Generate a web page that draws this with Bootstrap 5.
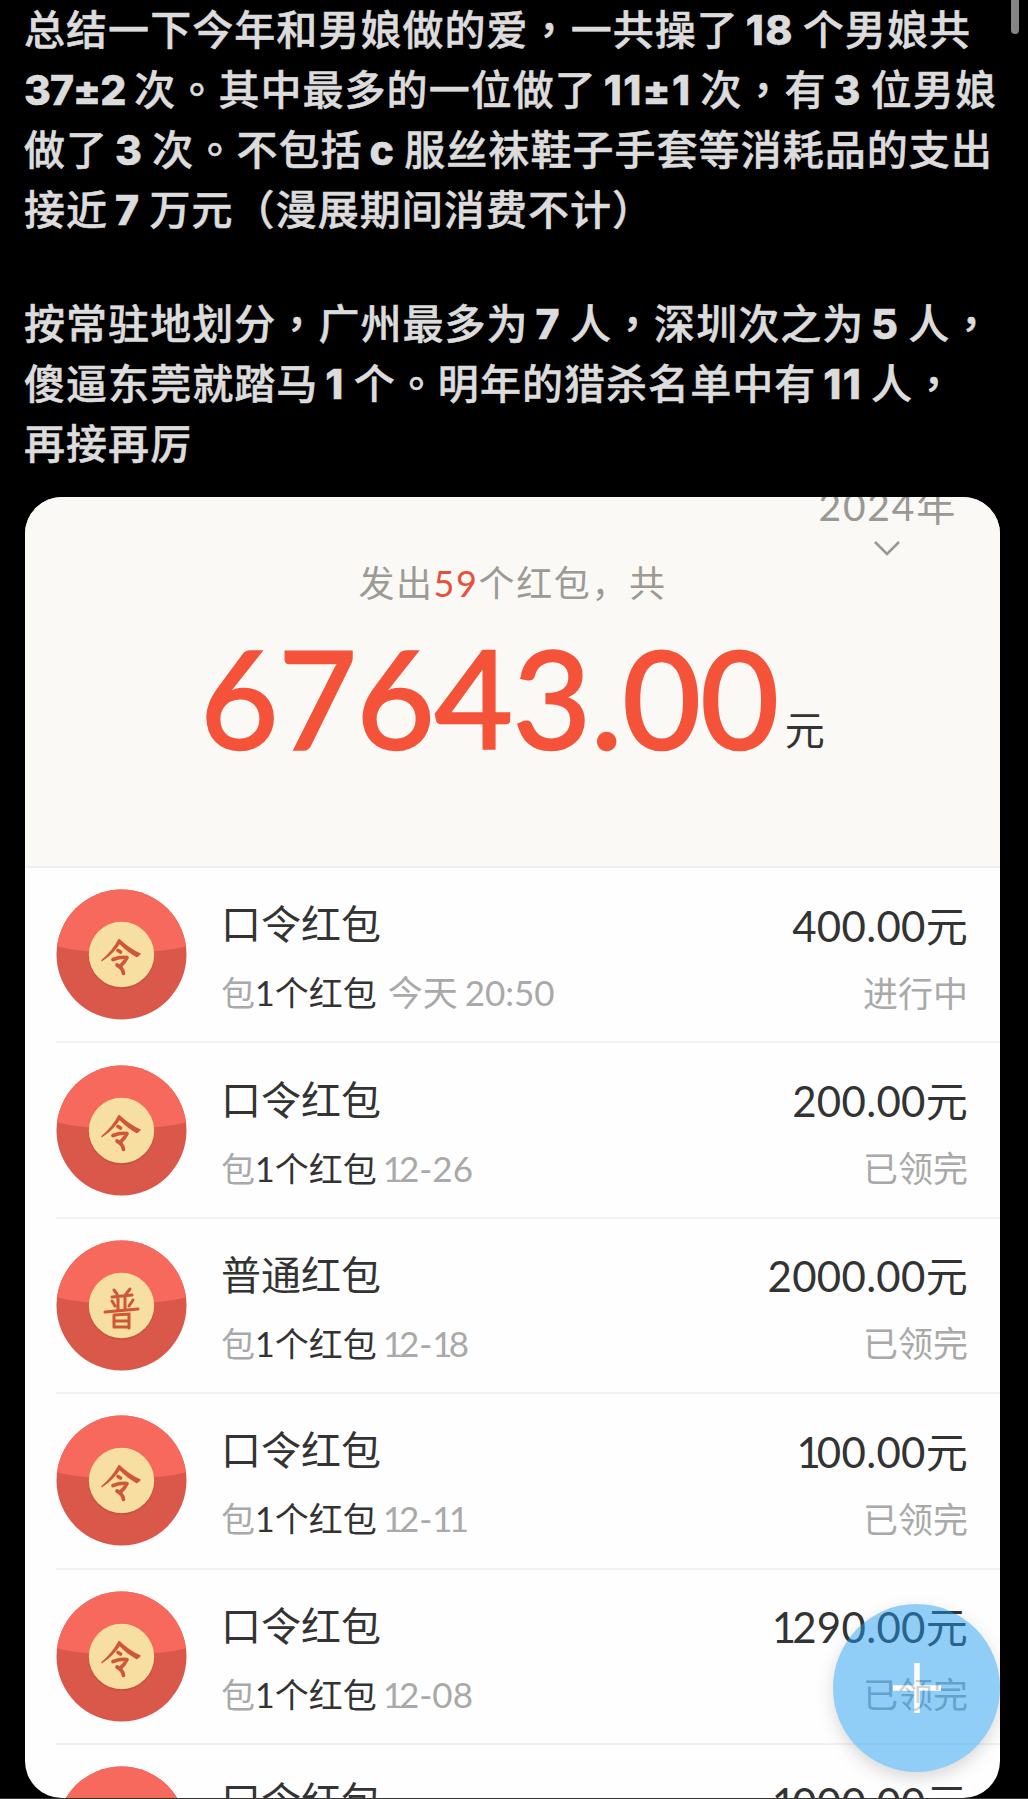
<!DOCTYPE html>
<html lang="zh-CN">
<head>
<meta charset="utf-8">
<meta name="viewport" content="width=device-width, initial-scale=1">
<title>红包记录</title>
<link rel="stylesheet" href="https://cdn.jsdelivr.net/npm/bootstrap@5.3.0/dist/css/bootstrap.min.css">
<style>
html{overflow:hidden}
body{background:#000;height:1799px;overflow:hidden;font-family:Lato,"Noto Sans CJK SC",sans-serif}
.post{padding:0 0 0 24px;color:#dcdcdc;font-family:Inter,"Noto Sans CJK SC",sans-serif;font-size:41px;font-weight:500;line-height:60px;letter-spacing:1.050px;word-spacing:-3px;height:497px;-webkit-text-stroke:.5px #dcdcdc}
.post p{margin:0 0 54px}
.post span{display:block;white-space:nowrap;height:60px;line-height:61px}
.post b{font-weight:800;letter-spacing:1.300px;margin-left:-2px}
.post span>b:first-child.lead-num{margin-left:0;letter-spacing:-1px}
.post i{font-style:normal;line-height:0;font-family:"Noto Sans CJK TC",sans-serif}
.scrollthumb{right:9px;top:-10px;width:8px;height:44px;border-radius:4px;background:#858585}
.shot{margin:0 28px 0 25px;height:1301px;border-radius:37px;background:#fefefe;overflow:hidden}
.summary{height:371px;background:#fbf9f5;border-bottom:2px solid #f0efed}
.year{right:43px;top:-18px;font-size:39px;line-height:54px;letter-spacing:1.8px;color:#999893}
.chev{right:99px;top:43px}
.sent{padding-top:57px;line-height:58px;font-size:36px;letter-spacing:1.6px;color:#9b9a95}
.sent em{font-style:normal;color:#e8503c}
.total{line-height:140px;height:140px;margin-top:15px}
.total strong{font-size:135px;font-weight:400;color:#f4533a;letter-spacing:-.2px;-webkit-text-stroke:2.5px #f4533a}
.total span{font-size:40px;color:#333;margin-left:6px;vertical-align:4px}
.entry{height:175.4px;margin-left:31px;padding-right:32px;border-bottom:2px solid #f1f1f0}
.entry>svg{width:131px;height:131px;flex:none}
.info{margin-left:34px}
.info,.sum{padding-top:8px}
.ttl{font-size:40px;line-height:60px;color:#333}
.amt{font-size:42px;line-height:62px;height:60px;color:#333;letter-spacing:.3px}
.sub{font-size:35px;line-height:60px;color:#a9a9a9;margin-top:8px}
.info .sub{font-size:34px}
.sub b{font-weight:400;color:#333}
.when{font-size:35px;margin-left:6px}
.today{margin-left:11px;word-spacing:-2px}
.one{letter-spacing:-4px}
.fab{right:28px;bottom:27px;width:167px;height:168px;opacity:.48;background:#1d9bf0;box-shadow:0 6px 16px rgba(0,0,0,.3)}
.baseline{left:0;bottom:0;width:100%;height:1px;background:#333}
</style>
</head>
<body class="position-relative">
<svg width="0" height="0" class="position-absolute" aria-hidden="true">
<defs>
<clipPath id="disc"><circle cx="65.5" cy="65.5" r="65"/></clipPath>
<g id="packet">
<circle cx="65.5" cy="65.5" r="65" fill="#d95849"/>
<path d="M0 0H131V57C101 66 30 66 0 57Z" fill="#f7685d" clip-path="url(#disc)"/>
<circle cx="65.5" cy="67" r="33" fill="#b94a3c" opacity=".5"/>
<circle cx="65.5" cy="65.5" r="32.7" fill="#f6dfa1"/>
</g>
<g id="ling" fill="#cf5637" stroke="#cf5637" stroke-linecap="round" stroke-linejoin="round">
<path d="M46 71.500Q57 62 63 50.500Q73 60 84 65L81 67.500Q72 63 63.500 54Q57 64 46 71.500Z" stroke-width="1.500"/>
<path fill="none" d="M62 61.500L64.500 63M57 70.500Q65 67.500 71 68.500Q69 73 64 77.500M61 76Q67 79 67.500 84.500" stroke-width="3.700"/>
</g>
<g id="pu" fill="none" stroke="#cf5637" stroke-linecap="round">
<path d="M58 50L61 54M74 49L70 54M56 57L76 55M62 56V69M69 55V69M56 61L59 66M77 60L73 66M49 72L82 69M58 75V87M58 75L73 74V88M59 81H72M58 87H73" stroke-width="3"/>
</g>
</defs>
</svg>
<section class="post">
<p><span>总结一下今年和男娘做的爱<i lang="zh-TW">，</i>一共操了 <b>18</b> 个男娘共</span>
<span><b class="lead-num">37±2</b> 次<i lang="zh-TW">。</i>其中最多的一位做了 <b>11±1</b> 次<i lang="zh-TW">，</i>有 <b>3</b> 位男娘</span>
<span>做了 <b>3</b> 次<i lang="zh-TW">。</i>不包括 <b>c</b> 服丝袜鞋子手套等消耗品的支出</span>
<span>接近 <b>7</b> 万元（漫展期间消费不计）</span></p>
<p><span>按常驻地划分<i lang="zh-TW">，</i>广州最多为 <b>7</b> 人<i lang="zh-TW">，</i>深圳次之为 <b>5</b> 人<i lang="zh-TW">，</i></span>
<span>傻逼东莞就踏马 <b>1</b> 个<i lang="zh-TW">。</i>明年的猎杀名单中有 <b>11</b> 人<i lang="zh-TW">，</i></span>
<span>再接再厉</span></p>
</section>
<div class="scrollthumb position-absolute"></div>
<main class="shot position-relative">
<header class="summary text-center position-relative">
<div class="year position-absolute">2024年</div>
<svg class="chev position-absolute" width="28" height="18" viewBox="0 0 28 18" fill="none" stroke="#999893" stroke-width="2.600"><path d="M2 2L14 14L26 2"/></svg>
<div class="sent">发出<em>59</em>个红包，共</div>
<div class="total"><strong>67643.00</strong><span>元</span></div>
</header>
<div id="entries"></div>
</main>
<button class="fab btn border-0 p-0 rounded-circle position-absolute d-flex align-items-center justify-content-center" aria-label="新建"><svg width="48" height="50" viewBox="0 0 48 50" stroke="#fff" stroke-width="5.500"><path d="M24 0V50M0 25H48"/></svg></button>
<div class="baseline position-absolute"></div>
<script src="https://cdn.jsdelivr.net/npm/bootstrap@5.3.0/dist/js/bootstrap.bundle.min.js"></script>
<script>
const rows=[['口令','今天 20:50','400.00','进行中'],['口令','12-26','200.00','已领完'],['普通','12-18','2000.00','已领完'],['口令','12-11','100.00','已领完'],['口令','12-08','1290.00','已领完'],['口令','12-05','1000.00','已领完']];
// The figure 1 is set tighter than the other digits
const tight=t=>t.replace(/1/g,'<span class="one">1</span>');
document.getElementById('entries').innerHTML=rows.map(([k,d,a,s])=>`<div class="entry d-flex align-items-center"><svg viewBox="0 0 131 131"><use href="#packet"/><use href="#${k==='普通'?'pu':'ling'}"/></svg><div class="info"><div class="ttl">${k}红包</div><div class="sub">包<b>1个红包</b><span class="when${d.startsWith('今')?' today':''}">${tight(d)}</span></div></div><div class="sum ms-auto text-end"><div class="amt">${tight(a)}元</div><div class="sub">${s}</div></div></div>`).join('');
</script>
</body>
</html>
